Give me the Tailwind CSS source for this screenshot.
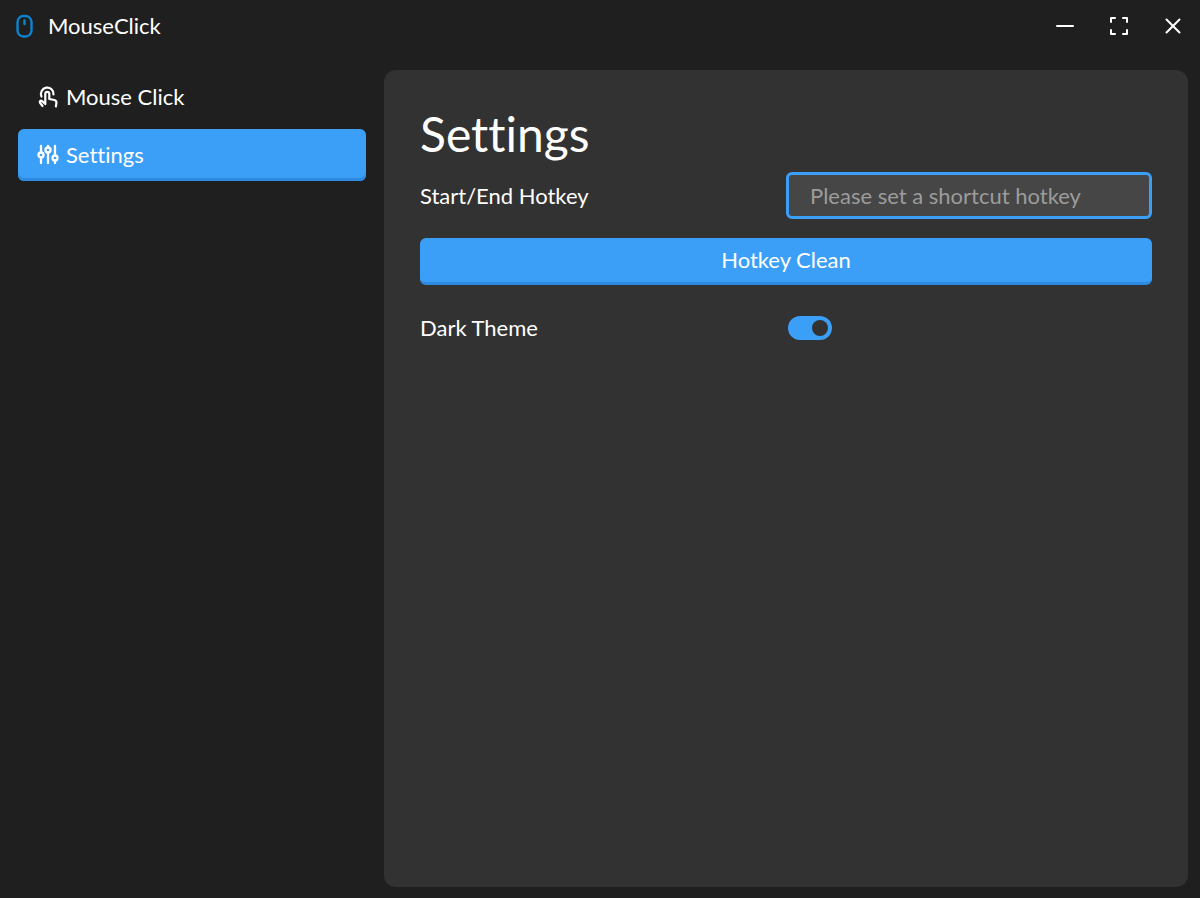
<!DOCTYPE html>
<html lang="en">
<head>
<meta charset="utf-8">
<meta name="viewport" content="width=device-width, initial-scale=1">
<title>MouseClick</title>
<script src="https://cdn.jsdelivr.net/npm/@tailwindcss/browser@4"></script>
</head>
<body class="flex min-h-screen flex-col bg-[#1f1f1f] font-['Lato',sans-serif] text-[22px] leading-7 text-white [font-variant-ligatures:none]">
  <header class="flex h-[52px] items-center px-3">
    <svg class="size-6" viewBox="0 0 24 24" fill="none" stroke="#0c83cc" stroke-width="2.400" stroke-linecap="round" stroke-linejoin="round" aria-hidden="true">
      <rect x="5.500" y="2" width="14" height="20.500" rx="6"/>
      <path d="M12.500 6.500v3.500"/>
    </svg>
    <h1 class="ml-3">MouseClick</h1>
    <div class="ml-auto flex gap-6">
      <button type="button" aria-label="Minimize" class="flex size-[30px] items-center justify-center">
        <svg class="size-6" viewBox="0 0 24 24" fill="none" stroke="currentColor" stroke-width="2" stroke-linecap="round" aria-hidden="true"><path d="M4 12h16"/></svg>
      </button>
      <button type="button" aria-label="Maximize" class="flex size-[30px] items-center justify-center">
        <svg class="size-6" viewBox="0 0 24 24" fill="none" stroke="currentColor" stroke-width="2" stroke-linecap="round" stroke-linejoin="round" aria-hidden="true"><path d="M4 8V4h4M16 4h4v4M20 16v4h-4M8 20H4v-4"/></svg>
      </button>
      <button type="button" aria-label="Close" class="flex size-[30px] items-center justify-center">
        <svg class="size-6" viewBox="0 0 24 24" fill="none" stroke="currentColor" stroke-width="2" stroke-linecap="round" aria-hidden="true"><path d="M5.500 5.500l13 13M18.500 5.500l-13 13"/></svg>
      </button>
    </div>
  </header>
  <div class="flex grow pr-3 pb-[11px]">
    <nav class="flex w-96 shrink-0 flex-col gap-1.5 px-[18px] pt-[19px]" aria-label="Main">
      <a href="#click" class="flex h-[52px] items-center gap-1.5 rounded-md px-[18px]">
        <svg class="size-6" viewBox="0 0 24 24" fill="none" stroke="currentColor" stroke-width="2.200" stroke-linecap="round" stroke-linejoin="round" aria-hidden="true">
          <path d="M5.500 11.500A6.300 6.300 0 1 1 17.500 9.500"/>
          <path d="M6.500 21L4 17.800c-.9-1.700.9-2.800 2.100-1.600L9.300 19V8.800a2 2 0 0 1 4 0V14l5 1c1.500.4 2.300 1.300 2.100 2.800L19.900 21.500"/>
        </svg>
        Mouse Click
      </a>
      <a href="#settings" aria-current="page" class="flex h-[52px] items-center gap-1.5 rounded-md bg-[#3b9ff7] px-[18px] shadow-[inset_0_-3px_0_#2d8ae0]">
        <svg class="size-6" viewBox="0 0 24 24" fill="none" stroke="currentColor" stroke-width="2.300" stroke-linecap="round" aria-hidden="true">
          <circle cx="5" cy="12" r="2.500"/><circle cx="12" cy="7" r="2.500"/><circle cx="19" cy="15" r="2.500"/>
          <path d="M5 3V9.500M5 14.500v5.500M12 3V4.500M12 9.500v10.500M19 3V12.500M19 17.500v2.500"/>
        </svg>
        Settings
      </a>
    </nav>
    <main class="mt-[18px] grow rounded-xl bg-[#323232] px-9 pt-9">
      <h2 class="text-5xl leading-[56px]">Settings</h2>
      <form>
        <div class="mt-2.5 grid grid-cols-2 items-center">
          <label for="hotkey">Start/End Hotkey</label>
          <input id="hotkey" type="text" placeholder="Please set a shortcut hotkey" class="h-[47px] w-full rounded-md border-3 border-[#3b9ff7] bg-[#464646] px-[21px] placeholder:text-[#9c9c9c] focus:outline-none">
        </div>
        <button type="button" class="mt-[19px] h-[47px] w-full rounded-md border-b-3 border-[#2d8ae0] bg-[#3b9ff7]">Hotkey Clean</button>
        <div class="mt-[29px] grid grid-cols-2 items-center">
          <label for="dark">Dark Theme</label>
          <input id="dark" type="checkbox" role="switch" checked class="ml-0.5 h-6 w-11 appearance-none rounded-full bg-gray-500 p-1 before:block before:size-4 before:rounded-full before:bg-[#323232] checked:bg-[#3b9ff7] checked:before:ml-5">
        </div>
      </form>
    </main>
  </div>
</body>
</html>
